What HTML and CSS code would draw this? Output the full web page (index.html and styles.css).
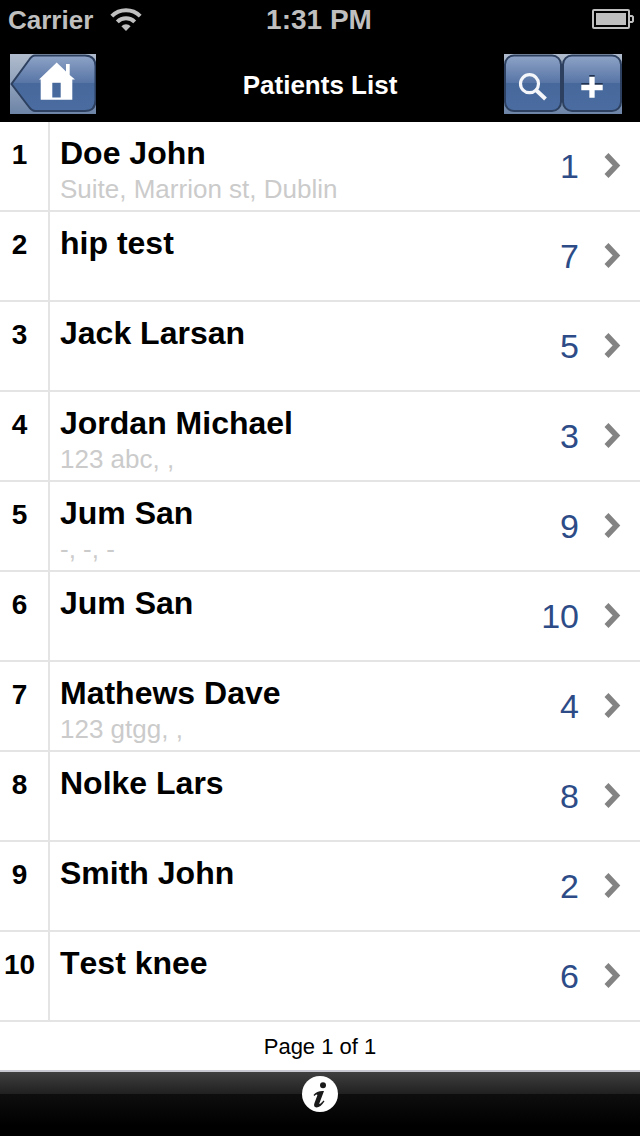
FILE: index.html
```html
<!DOCTYPE html>
<html lang="en">
<head>
  <meta charset="UTF-8" />
  <meta name="viewport" content="width=device-width, initial-scale=1.0"/>
  <title>Patients List</title>
  <link rel="stylesheet" href="styles.css">
</head>
<body>

  <div class="status-bar">
    <div class="status-left">
      <span class="carrier">Carrier</span>
      <svg class="wifi" width="32" height="24" viewBox="0 0 32 24">
        <path d="M1.8 8.2 A20.2 20.2 0 0 1 30.2 8.2" fill="none" stroke="#bfbfbf" stroke-width="4"/>
        <path d="M7.3 13.8 A12.3 12.3 0 0 1 24.7 13.8" fill="none" stroke="#bfbfbf" stroke-width="4"/>
        <path d="M11.4 18.2 A6.5 6.5 0 0 1 20.6 18.2 L16 23 Z" fill="#bfbfbf"/>
      </svg>
    </div>
    <span class="time">1:31 PM</span>
    <div class="status-right">
      <svg width="42" height="20" viewBox="0 0 42 20">
        <rect x="1" y="1" width="36" height="18" rx="1" fill="none" stroke="#bfbfbf" stroke-width="2"/>
        <rect x="4" y="4" width="30" height="12" fill="#bfbfbf"/>
        <path d="M38 7 H40 L41 8 V12 L40 13 H38" fill="none" stroke="#bfbfbf" stroke-width="2"/>
      </svg>
    </div>
  </div>

  <div class="nav-bar">
    <a href="#" class="home-button">
      <svg width="86" height="60" viewBox="0 0 86 60">
        <defs>
          <linearGradient id="blue" x1="0" y1="0" x2="0" y2="1">
            <stop offset="0" stop-color="#8fa4c7"/>
            <stop offset="0.5" stop-color="#5674a5"/>
            <stop offset="0.5" stop-color="#46689b"/>
            <stop offset="1" stop-color="#4a6ca0"/>
          </linearGradient>
          <linearGradient id="back" x1="0" y1="0" x2="0" y2="1">
            <stop offset="0" stop-color="#b0bccd"/>
            <stop offset="1" stop-color="#6d84a7"/>
          </linearGradient>
        </defs>
        <rect width="86" height="60" fill="url(#back)"/>
        <path d="M25 1.5 H75 Q85.5 2 85.5 12 V46 Q85.5 57 75 57 H25 Q22 57 19 53 L1.5 30 L19 6 Q22 1.5 25 1.5 Z" fill="url(#blue)" stroke="#2d405f" stroke-width="2"/>
        <path fill-rule="evenodd" d="M46.700 8.500 L56 17.500 V10 H59.700 V21 L65 25.500 H62.300 V45.700 H30.700 V25.500 H29 Z M42.300 28.700 V43.500 H50.700 V28.700 Z" fill="#fff"/>
      </svg>
    </a>
    <h1>Patients List</h1>
    <div class="nav-actions">
      <svg width="118" height="60" viewBox="0 0 118 60">
        <rect width="118" height="60" fill="url(#back)"/>
        <rect x="1" y="1.500" width="56" height="55.500" rx="9" fill="url(#blue)" stroke="#2d405f" stroke-width="2"/>
        <rect x="59" y="1.500" width="58" height="55.500" rx="9" fill="url(#blue)" stroke="#2d405f" stroke-width="2"/>
        <circle cx="25.500" cy="29.700" r="9" fill="none" stroke="#f4f6fa" stroke-width="3.200"/>
        <path d="M32 36 L41.500 45" stroke="#f4f6fa" stroke-width="4"/>
        <path d="M77.300 30 H98.700 M85.300 22 H90.700" stroke="#1f3252" stroke-width="2"/>
        <path d="M77.300 33.500 H98.700 M88 22.700 V43.700" stroke="#fff" stroke-width="5.300"/>
      </svg>
    </div>
  </div>

  <div class="patient-list" id="patient-list"></div>

  <div class="page-info">Page 1 of 1</div>

  <div class="toolbar">
    <svg width="36" height="36" viewBox="0 0 36 36">
      <circle cx="18" cy="18" r="18" fill="#fff"/>
      <circle cx="21" cy="9.200" r="3" fill="#1a1a1a"/>
      <path d="M11.500 19 Q15 14.500 22 15 L17.300 27.500 Q17.500 29 21.500 24.500 L22.500 25.300 Q18.500 31.500 14.500 31.500 Q11 31 12.500 27 L15.300 19.500 Q15.500 17.500 12.400 20 Z" fill="#1a1a1a"/>
    </svg>
  </div>

  <script>
    const patients = [
      { name: 'Doe John', address: 'Suite, Marrion st, Dublin', id: 1 },
      { name: 'hip test', address: '', id: 7 },
      { name: 'Jack Larsan', address: '', id: 5 },
      { name: 'Jordan Michael', address: '123 abc, ,', id: 3 },
      { name: 'Jum San', address: '-, -, -', id: 9 },
      { name: 'Jum San', address: '', id: 10 },
      { name: 'Mathews Dave', address: '123 gtgg, ,', id: 4 },
      { name: 'Nolke Lars', address: '', id: 8 },
      { name: 'Smith John', address: '', id: 2 },
      { name: 'Test knee', address: '', id: 6 }
    ];

    document.getElementById('patient-list').innerHTML = patients.map((p, i) => `
      <div class="patient">
        <div class="row-number">${i + 1}</div>
        <div class="details">
          <div class="name">${p.name}</div>
          <div class="address">${p.address}</div>
        </div>
        <div class="patient-id">${p.id}</div>
        <svg class="chevron" width="18" height="26" viewBox="0 0 18 26">
          <path d="M2.500 2 L12.500 12.500 L2.500 23" fill="none" stroke="#838383" stroke-width="5.500"/>
        </svg>
      </div>`).join('');
  </script>

</body>
</html>
```
FILE: styles.css
```css
body {
  margin: 0;
  font-family: "Liberation Sans", Helvetica, Arial, sans-serif;
  font-kerning: none;
  background-color: #fff;
  color: #000;
}

svg {
  display: block;
}

.status-bar {
  display: grid;
  grid-template-columns: 1fr auto 1fr;
  align-items: center;
  height: 40px;
  padding: 0 6px 0 8px;
  background-color: #000;
  color: #bfbfbf;
  font-weight: bold;
}

.status-left {
  display: flex;
  align-items: center;
  gap: 17px;
}

.carrier {
  font-size: 26px;
}

.time {
  margin-right: 4px;
  font-size: 28px;
  line-height: 38px;
}

.status-right {
  display: flex;
  justify-content: flex-end;
  padding-bottom: 2px;
}

.nav-bar {
  display: grid;
  grid-template-columns: 1fr auto 1fr;
  align-items: center;
  height: 60px;
  padding: 14px 18px 8px 10px;
  background-color: #000;
}

.nav-bar h1 {
  margin: 0 0 0 8px;
  padding-top: 2px;
  color: #fff;
  font-size: 26px;
}

.nav-actions {
  display: flex;
  justify-content: flex-end;
}

.patient {
  display: flex;
  align-items: center;
  height: 88px;
  border-bottom: 2px solid #e4e4e4;
}

.row-number {
  box-sizing: border-box;
  width: 50px;
  height: 88px;
  padding: 17px 9px 0 0;
  border-right: 2px solid #e4e4e4;
  font-size: 28px;
  font-weight: bold;
  line-height: 32px;
  text-align: center;
}

.details {
  flex: 1;
  height: 77px;
  padding: 11px 0 0 10px;
}

.name {
  font-size: 32px;
  font-weight: bold;
  line-height: 40px;
}

.address {
  margin-top: 1px;
  color: #cbcbcb;
  font-size: 26px;
  line-height: 30px;
}

.patient-id {
  color: #2d4c87;
  font-size: 34px;
  line-height: 40px;
}

.chevron {
  margin: 0 18px 0 25px;
}

.page-info {
  height: 48px;
  border-bottom: 2px solid #c8c9d1;
  font-size: 22px;
  line-height: 49px;
  text-align: center;
}

.toolbar {
  display: flex;
  justify-content: center;
  height: 60px;
  padding-top: 4px;
  background: linear-gradient(#404040 0, #202020 22px, #0e0e0e 22px, #000 54px);
}
```
